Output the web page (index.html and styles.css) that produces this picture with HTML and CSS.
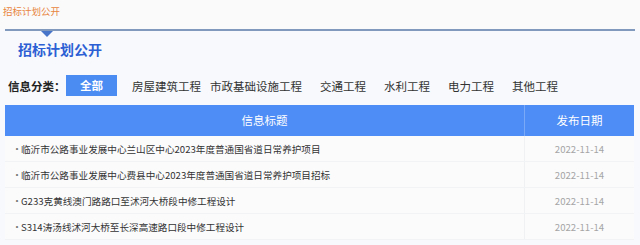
FILE: index.html
```html
<!DOCTYPE html>
<html lang="zh">
<head>
<meta charset="utf-8">
<link rel="stylesheet" href="styles.css">
</head>
<body>
<div class="page">
  <div class="crumb">招标计划公开</div>
  <div class="rule"></div>
  <h1 class="title">招标计划公开</h1>
  <div class="filter">
    <span class="label">信息分类：</span>
    <span class="btn active">全部</span>
    <span class="item first">房屋建筑工程</span>
    <span class="item">市政基础设施工程</span>
    <span class="item">交通工程</span>
    <span class="item">水利工程</span>
    <span class="item">电力工程</span>
    <span class="item">其他工程</span>
  </div>
  <div class="table">
    <div class="thead">
      <div class="c1">信息标题</div>
      <div class="c2">发布日期</div>
    </div>
    <div class="row"><div class="c1"><span class="dot">•</span>临沂市公路事业发展中心兰山区中心2023年度普通国省道日常养护项目</div><div class="c2">2022-11-14</div></div>
    <div class="row"><div class="c1"><span class="dot">•</span>临沂市公路事业发展中心费县中心2023年度普通国省道日常养护项目招标</div><div class="c2">2022-11-14</div></div>
    <div class="row"><div class="c1"><span class="dot">•</span>G233克黄线澳门路路口至沭河大桥段中修工程设计</div><div class="c2">2022-11-14</div></div>
    <div class="row"><div class="c1"><span class="dot">•</span>S314涛汤线沭河大桥至长深高速路口段中修工程设计</div><div class="c2">2022-11-14</div></div>
  </div>
</div>
</body>
</html>
```
FILE: styles.css
```css
* { box-sizing: border-box; margin: 0; padding: 0; }
html, body { width: 640px; height: 245px; overflow: hidden; }
body {
  background: #f7f9fc;
  font-family: "Noto Sans CJK SC", "Noto Sans", sans-serif;
  color: #333;
}
.page { position: relative; }
.crumb {
  background: #fafafa;
  height: 29px;
  padding: 4px 0 0 3px;
  font-size: 9.5px;
  line-height: 14px;
  color: #e8853f;
}
.rule {
  position: relative;
  margin: 0 5px;
  height: 2px;
  background: #8099bd;
}
.rule::after {
  content: "";
  position: absolute;
  left: 36px;
  top: 2px;
  border-left: 6px solid transparent;
  border-right: 6px solid transparent;
  border-top: 6px solid #4774c9;
}
.title {
  padding: 9px 0 0 18px;
  font-size: 14px;
  line-height: 18px;
  font-weight: bold;
  color: #2d5fd4;
}
.filter {
  display: flex;
  align-items: center;
  margin-top: 17px;
  padding-left: 8px;
  height: 21px;
  font-size: 11.5px;
}
.label { font-weight: bold; color: #222; width: 58px; }
.btn.active {
  background: #4b8cf3;
  color: #fff;
  width: 51px;
  height: 21px;
  line-height: 21px;
  text-align: center;
  font-weight: bold;
  margin-right: 15px;
}
.item { margin-right: 18px; color: #333; }
.item.first { margin-right: 9px; }
.table { margin: 9px 6px 0 5px; }
.thead {
  display: flex;
  height: 31px;
  background: #4e8df5;
  color: #fff;
  font-size: 11.5px;
  line-height: 31px;
}
.thead .c1 { flex: 1; text-align: center; border-right: 1px solid #7aaaf7; }
.thead .c2 { width: 109px; text-align: center; }
.row {
  display: flex;
  height: 26px;
  line-height: 26px;
  font-size: 9.6px;
  background: #fbfbfc;
  border-bottom: 1px solid #f2f3f5;
}
.row .c1 { flex: 1; padding-left: 7px; border-right: 1px solid #f0f1f3; color: #333; }
.row .c2 { width: 109px; text-align: center; color: #a5a5a5; }
.dot { display: inline-block; width: 9px; color: #777; font-size: 10px; }
```
